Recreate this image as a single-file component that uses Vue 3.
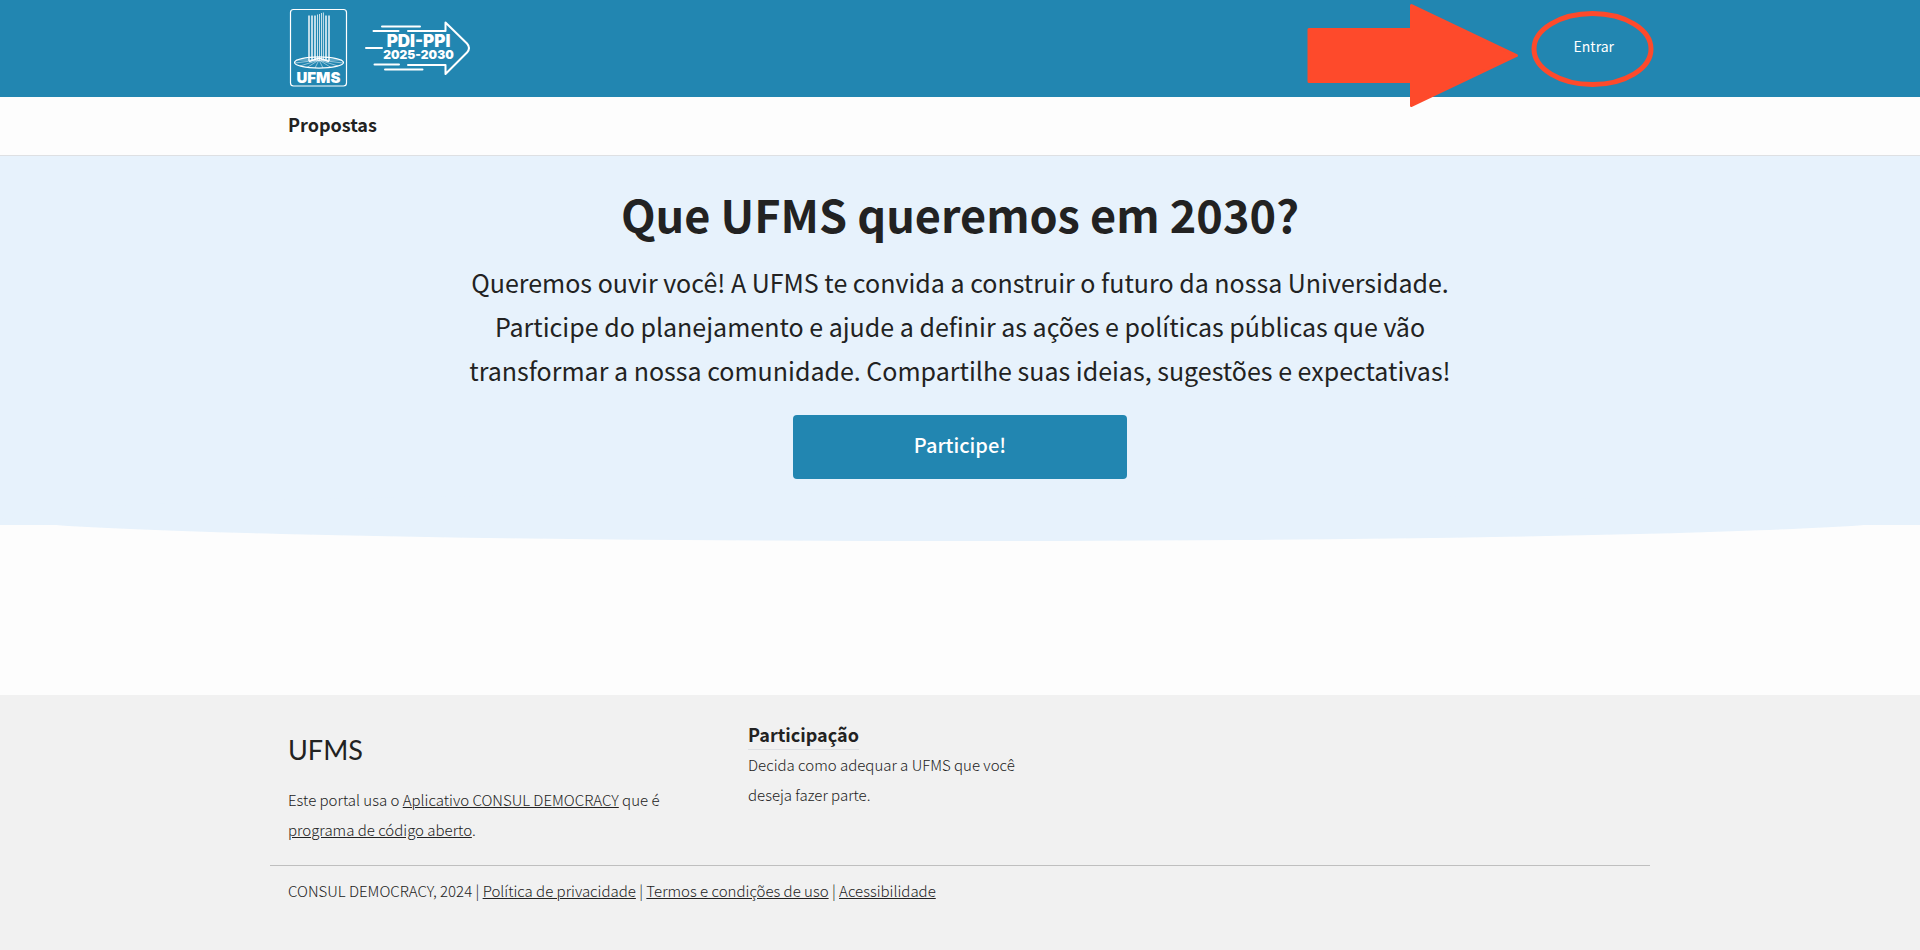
<script setup>
import { ref } from 'vue'

const menu = ref([{ label: 'Propostas', href: '#propostas' }])

const legalLinks = ref([
  { label: 'Política de privacidade', href: '#privacidade' },
  { label: 'Termos e condições de uso', href: '#termos' },
  { label: 'Acessibilidade', href: '#acessibilidade' },
])
</script>

<template>
  <div class="page">
    <header class="header">
      <div class="container header__inner">
        <a class="header__logo" href="#inicio" aria-label="UFMS PDI-PPI 2025-2030">
          <svg width="184" height="80" viewBox="288 8 184 80" fill="none" stroke="#fff">
            <rect x="290.5" y="9.5" width="56" height="76.5" rx="3" stroke-width="1.2" />
            <path d="M309 15.5V61M312 15.5V61M315 15.5V60M326 15.5V60M329 15.5V61" stroke-width="1.4" />
            <path d="M317.5 14.5V60M319.5 14V60M321.5 13V60M323.4 12.5V60" stroke-width="1" opacity=".75" />
            <ellipse cx="319" cy="62.5" rx="24.5" ry="5.6" stroke-width="1.2" />
            <path d="M319 60L296 60M319 60L295 63M319 60L300 66M319 60L307 67.5M319 60L315 68M319 60L323 68M319 60L331 67.5M319 60L338 66M319 60L343 63M319 60L342 60" stroke-width=".7" opacity=".75" />
            <path d="M309 61.5L319 58L329 61.5" stroke-width="1.4" />
            <text class="logo-text" x="318.5" y="83" font-size="15" text-anchor="middle">UFMS</text>
            <g stroke-width="2" stroke-linecap="round" stroke-linejoin="round">
              <path d="M382 26.5H420M373.5 31H398.5M366 48H382M374.5 64.5H399M385 69.5H422.5" />
              <path d="M408 31H445.5V22.5L467 43.5Q471 48 467 52.5L445.5 74V65H408" />
            </g>
            <text class="logo-text" x="418.5" y="47" font-size="17" text-anchor="middle">PDI-PPI</text>
            <text class="logo-text" x="418.5" y="59" font-size="12" text-anchor="middle">2025-2030</text>
          </svg>
        </a>
        <a class="header__login" href="#entrar">Entrar</a>
        <svg class="callout" width="360" height="110" viewBox="0 0 360 110" aria-hidden="true">
          <path d="M9 29.5H111.5V5.5L216.5 55.5L111.5 105.5V81.5H9Z" fill="#fe4a2b" stroke="#fe4a2b" stroke-width="3" stroke-linejoin="round" />
          <ellipse cx="292.5" cy="49" rx="58.5" ry="35.5" fill="none" stroke="#fe4a2b" stroke-width="5" />
        </svg>
      </div>
    </header>

    <nav class="menu">
      <div class="container menu__items">
        <a v-for="item in menu" :key="item.href" class="menu__link" :href="item.href">{{ item.label }}</a>
      </div>
    </nav>

    <main class="hero">
      <h1 class="hero__title">Que UFMS queremos em 2030?</h1>
      <p class="hero__text">
        Queremos ouvir você! A UFMS te convida a construir o futuro da nossa Universidade.
        Participe do planejamento e ajude a definir as ações e políticas públicas que vão
        transformar a nossa comunidade. Compartilhe suas ideias, sugestões e expectativas!
      </p>
      <a class="hero__button" href="#participe">Participe!</a>
    </main>

    <footer class="footer">
      <div class="container footer__columns">
        <section class="footer__about">
          <h2 class="footer__brand">UFMS</h2>
          <p>
            Este portal usa o <a href="#consul">Aplicativo CONSUL DEMOCRACY</a> que é
            <a href="#codigo">programa de código aberto</a>.
          </p>
        </section>
        <section class="footer__participation">
          <h3 class="footer__title"><a href="#participacao">Participação</a></h3>
          <p>Decida como adequar a UFMS que você deseja fazer parte.</p>
        </section>
      </div>
      <div class="container footer__legal">
        CONSUL DEMOCRACY, 2024
        <template v-for="link in legalLinks" :key="link.href">| <a :href="link.href">{{ link.label }}</a>{{ ' ' }}</template>
      </div>
    </footer>
  </div>
</template>

<style>
body {
  margin: 0;
  background: #fdfdfd;
}
</style>

<style scoped>
.page {
  display: flex;
  flex-direction: column;
  min-height: 100vh;
  color: #222;
  font-family: "Source Sans Pro", "Noto Sans CJK SC", sans-serif;
  font-size: 15px;
  font-weight: 300;
  line-height: 30px;
}

.page *,
.page *::after { box-sizing: border-box; }

h1, h2, h3, p { margin: 0; }

a { color: inherit; }

.container {
  width: 100%;
  max-width: 1380px;
  margin: 0 auto;
  padding: 0 18px;
}

.header {
  background: #2286b1;
  color: #fff;
}

.header__inner {
  position: relative;
  display: flex;
  align-items: center;
  justify-content: space-between;
  padding-top: 8px;
  padding-bottom: 9px;
}

.header__logo svg { display: block; }

.logo-text {
  fill: #fff;
  stroke: none;
  font-family: Inter, sans-serif;
  font-weight: 900;
}

.header__login {
  padding: 0 18px 4px;
  font-size: 14px;
  font-weight: 400;
  text-decoration: none;
}

/* arrow and ring drawn over the login link */
.callout {
  position: absolute;
  top: 0;
  right: -10px;
  z-index: 2;
  pointer-events: none;
}

.menu {
  padding: 12px 0 16px;
  border-bottom: 1px solid #dee0e3;
}

.menu__items { display: flex; }

.menu__link {
  font-size: 18px;
  font-weight: 700;
  text-decoration: none;
}

.hero {
  position: relative;
  padding: 28px 18px 46px;
  margin-bottom: 170px;
  background: #e7f2fc;
  text-align: center;
}

/* curved lower edge */
.hero::after {
  content: "";
  position: absolute;
  left: 0;
  bottom: -16px;
  z-index: 0;
  width: 100%;
  height: 48px;
  border-radius: 50%;
  background: #e7f2fc;
}

.hero__title {
  font-size: 45px;
  font-weight: 700;
  line-height: 60px;
}

.hero__text {
  max-width: 1020px;
  margin: 16px auto 23px;
  font-size: 25px;
  font-weight: 400;
  line-height: 44px;
}

.hero__button {
  position: relative;
  z-index: 1;
  display: block;
  width: 334px;
  max-width: 100%;
  margin: 0 auto;
  padding: 15px 0 19px;
  border-radius: 4px;
  background: #2286b1;
  color: #fff;
  font-size: 20px;
  font-weight: 500;
  text-decoration: none;
}

.footer {
  flex: 1;
  padding: 24px 0;
  background: #f1f1f1;
}

.footer__columns {
  display: flex;
  gap: 36px;
  padding-bottom: 20px;
  border-bottom: 1px solid #bfbfbf;
}

.footer__about {
  width: 424px;
  padding-top: 10px;
}

.footer__brand {
  margin-bottom: 14px;
  font-family: Lato, sans-serif;
  font-size: 27px;
  font-weight: 400;
  line-height: 42px;
}

.footer__participation { width: 309px; }

.footer__title {
  display: flex;
  font-size: 18px;
  font-weight: 700;
  line-height: 30px;
}

.footer__title a {
  border-bottom: 1px solid #dee0e3;
  text-decoration: none;
}

.footer__legal { padding-top: 10px; }

@media (max-width: 700px) {
  .callout { display: none; }
  .footer__columns { flex-direction: column; }
  .footer__about, .footer__participation { width: 100%; }
}
</style>
